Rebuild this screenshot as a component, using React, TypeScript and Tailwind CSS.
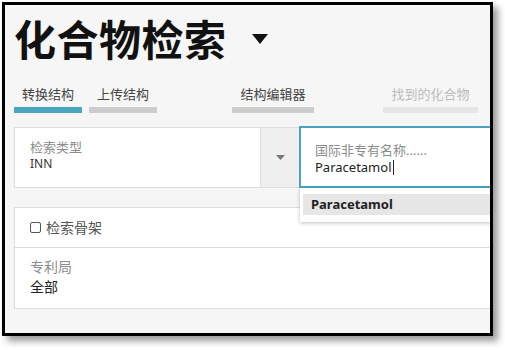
import React from "react";

export default function App() {
  return (
    <div className="w-[505px] h-[350px] bg-white font-['Noto_Sans','Noto_Sans_CJK_SC',sans-serif]">
      <div className="ml-[2px] mt-[2px] w-[491px] h-[334px] border-[3px] border-black bg-[#f6f6f6] overflow-hidden shadow-[5px_5px_7px_rgba(0,0,0,0.4)]">
        <div className="pl-[9px]">
          {/* Title */}
          <div className="mt-[11px] h-[44px] flex items-center">
            <span className="text-[42px] leading-none font-bold tracking-[0.5px] text-[#111] font-['Noto_Sans_CJK_SC',sans-serif]">化合物检索</span>
            <svg className="ml-[25px] mt-[3px]" width="16" height="11" viewBox="0 0 16 11">
              <polygon points="0,0 16,0 8,10" fill="#111" />
            </svg>
          </div>

          {/* Tabs */}
          <div className="mt-[25px] flex items-start text-[13px] leading-[18px]">
            <div className="w-[68px] flex flex-col items-center">
              <span className="text-[#444]">转换结构</span>
              <div className="mt-[4px] h-[6px] w-full bg-[#4aa3bf]" />
            </div>
            <div className="ml-[7px] w-[68px] flex flex-col items-center">
              <span className="text-[#444]">上传结构</span>
              <div className="mt-[4px] h-[6px] w-full bg-[#cccccc]" />
            </div>
            <div className="ml-[75px] w-[82px] flex flex-col items-center">
              <span className="text-[#444]">结构编辑器</span>
              <div className="mt-[4px] h-[6px] w-full bg-[#cccccc]" />
            </div>
            <div className="ml-[69px] w-[95px] flex flex-col items-center">
              <span className="text-[#bbbbbb]">找到的化合物</span>
              <div className="mt-[4px] h-[6px] w-full bg-[#e6e6e6]" />
            </div>
          </div>

          {/* Search box */}
          <div className="relative mt-[14px] w-[500px]">
            <div className="flex h-[61px] border border-[#dddddd] bg-white">
              <div className="w-[245px] pl-[15px] pt-[10px]">
                <div className="text-[13px] leading-[18px] text-[#8c8c8c]">检索类型</div>
                <div className="text-[12px] leading-[16px] text-[#333]">INN</div>
              </div>
              <div className="w-[39px] bg-[#efefef] border-l border-[#dddddd] flex items-center justify-center">
                <svg width="9" height="6" viewBox="0 0 9 6">
                  <polygon points="0,0 9,0 4.5,5" fill="#777" />
                </svg>
              </div>
              <div className="-mt-[2px] -mb-[1px] flex-1 border-2 border-[#4aa3bf] bg-white pl-[14px] pt-[13px]">
                <div className="text-[13px] leading-[18px] text-[#8c8c8c]">国际非专有名称......</div>
                <div className="flex items-center text-[13px] leading-[17px] text-[#222]">
                  Paracetamol
                  <span className="ml-[1px] inline-block w-[1px] h-[15px] bg-[#222]" />
                </div>
              </div>
            </div>

            {/* Suggestion dropdown */}
            <div className="absolute left-[286px] top-[61px] w-[220px] h-[34px] bg-white shadow-[0_1px_4px_rgba(0,0,0,0.25)] pl-[3px] pt-[6px] z-10">
              <div className="h-[21px] bg-[#e6e6e6] pl-[8px] flex items-center text-[13px] font-bold text-[#222]">
                Paracetamol
              </div>
            </div>
          </div>

          {/* Second box */}
          <div className="mt-[19px] w-[500px] border border-[#dddddd] bg-white">
            <div className="h-[40px] flex items-center pl-[15px] border-b border-[#dddddd]">
              <div className="w-[11px] h-[11px] border border-[#555] rounded-[2px] bg-white" />
              <span className="ml-[5px] text-[14px] text-[#555]">检索骨架</span>
            </div>
            <div className="h-[60px] pl-[15px] pt-[9px]">
              <div className="text-[14px] leading-[20px] text-[#8c8c8c]">专利局</div>
              <div className="text-[14px] leading-[20px] text-[#222]">全部</div>
            </div>
          </div>
        </div>
      </div>
    </div>
  );
}
